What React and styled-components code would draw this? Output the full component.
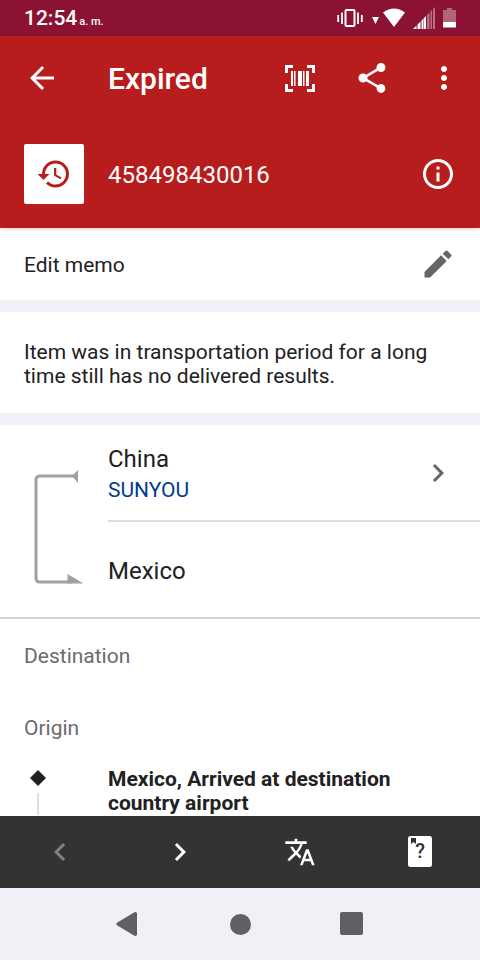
import React from "react";
import styled, { createGlobalStyle, ThemeProvider } from "styled-components";
import {
  MdArrowBack,
  MdChevronLeft,
  MdChevronRight,
  MdEdit,
  MdHistory,
  MdInfoOutline,
  MdMoreVert,
  MdShare,
  MdTranslate,
} from "react-icons/md";

const theme = {
  status: "#8b1232",
  primary: "#b71d1c",
  bg: "#f0f1f6",
  surface: "#ffffff",
  text: "#212121",
  textSoft: "#6b6b6b",
  link: "#003c8f",
  icon: "#666666",
  soft: "#dedede",
  divider: "#d3d3d8",
  bar: "#333333",
  nav: "#5f6064",
};

const GlobalStyle = createGlobalStyle`
  * {
    box-sizing: border-box;
  }
  body {
    margin: 0;
    font-family: Roboto, "Liberation Sans", sans-serif;
    font-size: 21px;
    line-height: 24px;
  }
  h1, h2, h3, p {
    margin: 0;
    font-size: inherit;
    font-weight: inherit;
  }
  svg {
    display: block;
    flex-shrink: 0;
  }
`;

const Container = styled.div`
  display: flex;
  flex-direction: column;
  height: 100vh;
  background-color: ${({ theme }) => theme.bg};
  color: ${({ theme }) => theme.text};
`;
const StatusBar = styled.div`
  display: flex;
  align-items: center;
  justify-content: space-between;
  flex-shrink: 0;
  height: 36px;
  padding: 0 24px;
  background-color: ${({ theme }) => theme.status};
  color: white;
`;
const Clock = styled.time`
  padding-top: 4px;
  font-size: 21px;
  font-weight: 500;
`;
const Period = styled.span`
  margin-left: 2px;
  font-size: 11px;
`;
const StatusIcons = styled.div`
  display: flex;
  align-items: center;
  gap: 8px;
`;
const Header = styled.header`
  position: relative;
  flex-shrink: 0;
  background-color: ${({ theme }) => theme.primary};
  color: white;
  box-shadow: 0 1px 4px rgba(0, 0, 0, 0.2);
`;
const Toolbar = styled.div`
  display: flex;
  align-items: center;
  height: 84px;
`;
const IconButton = styled.button`
  display: flex;
  align-items: center;
  justify-content: center;
  flex-shrink: 0;
  width: ${({ $width }) => $width || 36}px;
  height: ${({ $height }) => $height || 36}px;
  padding: 0;
  border: none;
  background-color: transparent;
  color: ${({ $color }) => $color || "inherit"};
  cursor: pointer;
`;
const Title = styled.h1`
  flex: 1;
  padding: 2px 0 0 24px;
  font-size: 30px;
  font-weight: 500;
  line-height: 36px;
`;
const Package = styled.div`
  display: flex;
  align-items: center;
  gap: 24px;
  padding: 24px;
`;
const StatusTile = styled.div`
  display: flex;
  align-items: center;
  justify-content: center;
  width: 60px;
  height: 60px;
  border-radius: 2px;
  background-color: ${({ theme }) => theme.surface};
  color: ${({ theme }) => theme.primary};
`;
const TrackingNumber = styled.h2`
  flex: 1;
  padding-top: 2px;
  font-size: 24px;
`;
const Content = styled.main`
  flex: 1;
  min-height: 0;
  overflow-y: auto;
  scrollbar-width: none;
`;
const Card = styled.section`
  margin-bottom: 12px;
  background-color: ${({ theme }) => theme.surface};
`;
const MemoRow = styled(Card)`
  display: flex;
  align-items: center;
  justify-content: space-between;
  height: 72px;
  padding: 0 24px;
`;
const MemoText = styled.p`
  padding-top: 2px;
`;
const Message = styled(Card)`
  padding: 28px 24px 25px;
`;
const Route = styled.div`
  display: flex;
  border-bottom: 2px solid ${({ theme }) => theme.divider};
`;
const Stops = styled.div`
  flex: 1;
`;
const Stop = styled.div`
  display: flex;
  align-items: center;
  justify-content: space-between;
  height: ${({ $line }) => ($line ? 97 : 95)}px;
  padding-right: 24px;
  border-bottom: ${({ $line, theme }) =>
    $line ? `2px solid ${theme.soft}` : "none"};
`;
const StopText = styled.div`
  padding-top: 3px;
`;
const Country = styled.h3`
  font-size: 24px;
  line-height: 32px;
`;
const Carrier = styled.a`
  display: block;
  line-height: 30px;
  color: ${({ theme }) => theme.link};
  text-decoration: none;
`;
const SectionLabel = styled.h2`
  height: 72px;
  padding: 0 24px;
  line-height: 74px;
  color: ${({ theme }) => theme.textSoft};
`;
const Event = styled.div`
  display: flex;
  gap: 24px;
  padding: 4px 24px 24px;
`;
const Marker = styled.div`
  display: flex;
  flex-direction: column;
  align-items: center;
  gap: 6px;
  width: 28px;
  margin-right: 32px;
  padding-top: 2px;
`;
const Stem = styled.div`
  flex: 1;
  width: 2px;
  background-color: ${({ theme }) => theme.soft};
`;
const EventText = styled.p`
  flex: 1;
  font-weight: 700;
`;
const BottomBar = styled.nav`
  display: grid;
  grid-template-columns: repeat(4, 1fr);
  justify-items: center;
  flex-shrink: 0;
  background-color: ${({ theme }) => theme.bar};
  color: white;
`;
const SystemNav = styled.nav`
  display: flex;
  justify-content: center;
  flex-shrink: 0;
  height: 72px;
  color: ${({ theme }) => theme.nav};
`;

const VibrateIcon = () => (
  <svg width="26" height="18" viewBox="0 0 26 18">
    <rect x="8.500" y="1" width="9" height="16" rx="1" fill="none" stroke="white" strokeWidth="2" />
    <path
      d="M1.200 6v7M5 3.500v11.500M21 3.500v11.500M24.800 6v7"
      stroke="white"
      strokeWidth="1.800"
    />
  </svg>
);

const WifiIcon = () => (
  <svg width="34" height="20" viewBox="0 0 34 20">
    <path d="M1 9h7l-3.500 7z" fill="white" />
    <path d="M12 4.500Q23 -3.500 34 4.500L23 19z" fill="white" />
  </svg>
);

const SignalIcon = () => (
  <svg width="22" height="22" viewBox="0 0 22 22">
    <path
      d="M0 22l3.500-3.500V22zM4.500 22v-4.500L7.500 14.500V22zM8.500 22v-8.500l1.500-1.500V22zM10.500 22V11.500L13 9V22z"
      fill="white"
    />
    <path
      d="M14 22V8l2.500-2.500V22zM17.500 22V4.500L19 3V22zM20 22V2l2-2v22z"
      fill="white"
      opacity="0.4"
    />
  </svg>
);

const BatteryIcon = () => (
  <svg width="13" height="20" viewBox="0 0 13 20">
    <path d="M4 0h5v2h4v12H0V2h4z" fill="white" opacity="0.35" />
    <path d="M0 14h13v5.500H0z" fill="white" />
  </svg>
);

const BarcodeIcon = () => (
  <svg width="30" height="27" viewBox="0 0 30 27" fill="currentColor">
    <path d="M0 0h8v3H3v5H0zM22 0h8v8h-3V3h-5zM0 19h3v5h5v3H0zM27 19h3v8h-8v-3h5z" />
    <path d="M6 6h2v15H6zM9 6h1.500v15H9zM13 6h4v15h-4zM18 6h1.500v15H18zM21 6h3v15h-3z" />
  </svg>
);

const RouteLine = () => (
  <svg width="108" height="192" viewBox="0 0 108 192">
    <path
      d="M75 51H40Q36 51 36 55V153Q36 157 40 157H72"
      fill="none"
      stroke="#a0a0a0"
      strokeWidth="3"
    />
    <path d="M72 51l6-6v13zM67.500 149l16 9.500h-16z" fill="#a0a0a0" />
  </svg>
);

const HelpIcon = () => (
  <svg width="24" height="32" viewBox="0 0 24 32">
    <rect width="24" height="31" rx="2.500" fill="white" />
    <path d="M3 2h5v6L5.500 6 3 8z" fill={theme.bar} />
    <text
      x="12"
      y="22"
      textAnchor="middle"
      fontFamily="Roboto, sans-serif"
      fontSize="20"
      fontWeight="500"
      fill={theme.bar}
    >
      ?
    </text>
  </svg>
);

const App = () => {
  return (
    <ThemeProvider theme={theme}>
      <GlobalStyle />
      <Container>
        <StatusBar>
          <Clock>
            12:54<Period>a. m.</Period>
          </Clock>
          <StatusIcons>
            <VibrateIcon />
            <WifiIcon />
            <SignalIcon />
            <BatteryIcon />
          </StatusIcons>
        </StatusBar>
        <Header>
          <Toolbar>
            <IconButton $width={84} $height={84} aria-label="Back">
              <MdArrowBack size={36} />
            </IconButton>
            <Title>Expired</Title>
            <IconButton $width={72} $height={84} aria-label="Scan barcode">
              <BarcodeIcon />
            </IconButton>
            <IconButton $width={72} $height={84} aria-label="Share">
              <MdShare size={36} />
            </IconButton>
            <IconButton $width={72} $height={84} aria-label="More">
              <MdMoreVert size={36} />
            </IconButton>
          </Toolbar>
          <Package>
            <StatusTile>
              <MdHistory size={36} />
            </StatusTile>
            <TrackingNumber>458498430016</TrackingNumber>
            <IconButton aria-label="Info">
              <MdInfoOutline size={36} />
            </IconButton>
          </Package>
        </Header>
        <Content>
          <MemoRow>
            <MemoText>Edit memo</MemoText>
            <IconButton $color={theme.icon} aria-label="Edit memo">
              <MdEdit size={36} />
            </IconButton>
          </MemoRow>
          <Message>
            <p>
              Item was in transportation period for a long time still has no
              delivered results.
            </p>
          </Message>
          <Card>
            <Route>
              <RouteLine />
              <Stops>
                <Stop $line>
                  <StopText>
                    <Country>China</Country>
                    <Carrier href="#sunyou">SUNYOU</Carrier>
                  </StopText>
                  <IconButton $color={theme.icon} aria-label="Open carrier">
                    <MdChevronRight size={36} />
                  </IconButton>
                </Stop>
                <Stop>
                  <StopText>
                    <Country>Mexico</Country>
                  </StopText>
                </Stop>
              </Stops>
            </Route>
            <SectionLabel>Destination</SectionLabel>
            <SectionLabel>Origin</SectionLabel>
            <Event>
              <Marker>
                <svg width="18" height="18" viewBox="0 0 18 18">
                  <path d="M9 1l8 8-8 8-8-8z" fill={theme.text} />
                </svg>
                <Stem />
              </Marker>
              <EventText>
                Mexico, Arrived at destination country airport
              </EventText>
            </Event>
          </Card>
        </Content>
        <BottomBar>
          <IconButton $width={72} $height={72} $color="#808080" aria-label="Previous">
            <MdChevronLeft size={36} />
          </IconButton>
          <IconButton $width={72} $height={72} aria-label="Next">
            <MdChevronRight size={36} />
          </IconButton>
          <IconButton $width={72} $height={72} aria-label="Translate">
            <MdTranslate size={32} />
          </IconButton>
          <IconButton $width={72} $height={72} aria-label="Help">
            <HelpIcon />
          </IconButton>
        </BottomBar>
        <SystemNav>
          <IconButton $width={112} $height={72} aria-label="System back">
            <svg width="26" height="24" viewBox="0 0 26 24" fill="currentColor">
              <path d="M22 1v22q-1.500 1.500-3 .5L2 13.300q-1.500-1.300 0-2.600L19 .5q1.500-1 3 .5z" />
            </svg>
          </IconButton>
          <IconButton $width={112} $height={72} aria-label="Home">
            <svg width="22" height="22" viewBox="0 0 22 22" fill="currentColor">
              <circle cx="11.500" cy="11.500" r="10.500" />
            </svg>
          </IconButton>
          <IconButton $width={112} $height={72} aria-label="Recent apps">
            <svg width="24" height="24" viewBox="0 0 24 24" fill="currentColor">
              <rect width="23" height="23" rx="2" />
            </svg>
          </IconButton>
        </SystemNav>
      </Container>
    </ThemeProvider>
  );
};
export default App;
